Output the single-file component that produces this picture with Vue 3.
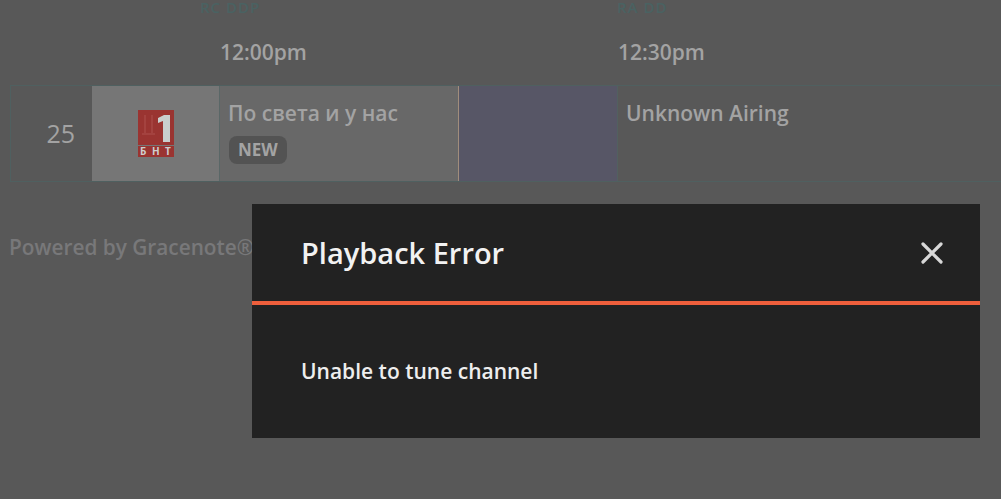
<script setup>
const times = ['12:00pm', '12:30pm']
</script>

<template>
  <div class="guide">
    <div class="dates">
      <span class="date">RC DDP</span>
      <span class="date">RA DD</span>
    </div>
    <div class="times">
      <span v-for="t in times" :key="t" class="time">{{ t }}</span>
    </div>
    <div class="row">
      <div class="number">25</div>
      <div class="logo">
        <svg width="36" height="47" viewBox="0 0 36 47">
          <rect x="0" y="0" width="36" height="35" fill="#9a3431" />
          <path d="M6 5h2v18h-2zM13 5h2v18h-2zM4 23h13v2H4z" fill="#a4423f" />
          <path d="M20 8l6-3h6v27h-7V11l-5 2z" fill="#c9cfce" />
          <rect x="0" y="36" width="36" height="11" fill="#9a3431" />
          <text x="2" y="45" class="logo-text">Б</text>
          <text x="14" y="45" class="logo-text">Н</text>
          <text x="27" y="45" class="logo-text">Т</text>
        </svg>
      </div>
      <div class="airing current">
        <div class="title">По света и у нас</div>
        <span class="badge">NEW</span>
      </div>
      <div class="gap"></div>
      <div class="airing">
        <div class="title">Unknown Airing</div>
      </div>
    </div>
    <div class="powered">Powered by Gracenote®</div>
  </div>

  <div class="modal">
    <div class="modal-head">
      <h2>Playback Error</h2>
      <svg class="close" width="24" height="24" viewBox="0 0 24 24">
        <path d="M3 3L21 21M21 3L3 21" stroke="#d8d8d8" stroke-width="3.2" stroke-linecap="round" />
      </svg>
    </div>
    <div class="modal-body">Unable to tune channel</div>
  </div>
</template>

<style>
html, body {
  margin: 0;
  height: 100%;
  overflow: hidden;
  background: #585858;
}
</style>

<style scoped>
.guide {
  height: 499px;
  padding-left: 10px;
  font-family: "Open Sans", sans-serif;
  color: #a3a3a3;
  overflow: hidden;
  position: relative;
}

.dates {
  display: flex;
  height: 15px;
  padding-left: 190px;
  font-size: 15px;
  font-weight: 600;
  letter-spacing: 1px;
  line-height: 15px;
  color: #4a6262;
}

.date {
  flex: none;
  width: 417px;
}

.times {
  display: flex;
  padding: 24px 0 0 210px;
  height: 29px;
  line-height: 27px;
  font-size: 21px;
  font-weight: 600;
  margin-bottom: 17px;
}

.time {
  flex: none;
  width: 398px;
}

.row {
  display: flex;
  width: 1100px;
  height: 97px;
  box-sizing: border-box;
  border: 1px solid #4f6060;
}

.number {
  flex: none;
  width: 81px;
  padding-right: 17px;
  box-sizing: border-box;
  text-align: right;
  font-size: 25px;
  font-weight: 500;
  line-height: 95px;
}

.logo {
  flex: none;
  width: 128px;
  box-sizing: border-box;
  background: #767676;
  display: flex;
  align-items: center;
  justify-content: center;
  border-right: 1px solid #5a6767;
}

.airing {
  flex: 1;
  padding: 13px 8px;
}

.current {
  flex: none;
  width: 239px;
  box-sizing: border-box;
  background: #686868;
  border-right: 1px solid #a18d7c;
}

.gap {
  flex: none;
  width: 159px;
  box-sizing: border-box;
  background: #575666;
  border-right: 1px solid #526060;
}

.title {
  font-size: 21px;
  font-weight: 600;
  line-height: 29px;
}

.badge {
  display: block;
  width: fit-content;
  margin: 8px 0 0 1px;
  padding: 0 9px;
  height: 28px;
  line-height: 28px;
  border-radius: 8px;
  background: #535353;
  font-size: 17px;
  font-weight: 700;
}

.powered {
  margin-top: 52px;
  margin-left: -1px;
  font-size: 20.8px;
  font-weight: 600;
  line-height: 27px;
  color: #78787a;
  white-space: nowrap;
}

.modal {
  position: absolute;
  left: 252px;
  top: 204px;
  width: 728px;
  height: 234px;
  background: #222;
  font-family: "Open Sans", sans-serif;
  color: #eee;
}

.modal-head {
  display: flex;
  align-items: center;
  justify-content: space-between;
  height: 97px;
  padding: 0 36px 0 49px;
  border-bottom: 4px solid #ee5f3c;
}

.modal-head h2 {
  margin: 0;
  font-size: 29px;
  font-weight: 600;
  color: #f2f2f2;
}

.modal-body {
  padding: 53px 49px 0;
  font-size: 21px;
  font-weight: 600;
  line-height: 27px;
}

.logo-text {
  font-family: "Open Sans", sans-serif;
  font-size: 10px;
  font-weight: 700;
  fill: #cfcfcf;
}
</style>
